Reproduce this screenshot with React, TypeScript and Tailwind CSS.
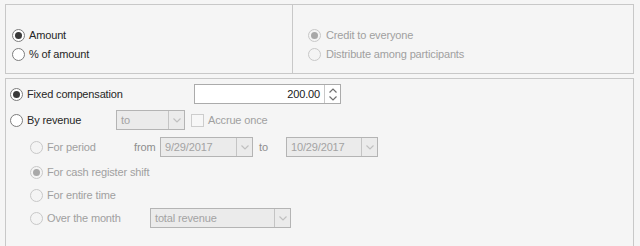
import React from 'react'

function Radio({ checked = false, disabled = false }: { checked?: boolean; disabled?: boolean }) {
  return (
    <div
      className={
        disabled
          ? 'w-[13px] h-[13px] shrink-0 rounded-full border border-[#c8c8c8] bg-[#f4f4f4] flex items-center justify-center'
          : 'w-[13px] h-[13px] shrink-0 rounded-full border border-[#7c7c7c] bg-white flex items-center justify-center'
      }
    >
      {checked && (
        <div className={disabled ? 'w-[7px] h-[7px] rounded-full bg-[#a8a8a8]' : 'w-[7px] h-[7px] rounded-full bg-[#3a3a3a]'} />
      )}
    </div>
  )
}

function Chevron({ down = true, color = '#c0c0c0' }: { down?: boolean; color?: string }) {
  return (
    <svg width="8" height="5" viewBox="0 0 8 5">
      <polyline
        points={down ? '0.5,0.5 4,4 7.5,0.5' : '0.5,4.5 4,1 7.5,4.5'}
        fill="none"
        stroke={color}
        strokeWidth="1.2"
      />
    </svg>
  )
}

function Combo({ text, className }: { text: string; className: string }) {
  return (
    <div className={`${className} h-full flex border border-[#b4b4b4] bg-[#ebebeb]`}>
      <div className="flex-1 flex items-center pl-[4px] text-[#a3a3a3] overflow-hidden whitespace-nowrap">{text}</div>
      <div className="w-[16px] border-l border-[#c4c4c4] flex items-center justify-center">
        <Chevron />
      </div>
    </div>
  )
}

export default function App() {
  return (
    <div className="w-[640px] h-[246px] overflow-hidden bg-[#f5f5f5] font-['Liberation_Sans',Arial,sans-serif] text-[11px] tracking-[-0.15px] text-[#262626] leading-none">
      {/* Top: calculation mode */}
      <div className="ml-[5px] mt-[4px] w-[629px] h-[70px] border border-[#c8c8c8] flex">
        <div className="w-[287px] border-r border-[#c8c8c8] pl-[6px] pt-[21px]">
          <div className="h-[19px] flex items-center gap-[4px]">
            <Radio checked />
            <span>Amount</span>
          </div>
          <div className="h-[19px] flex items-center gap-[4px]">
            <Radio />
            <span>% of amount</span>
          </div>
        </div>
        <div className="flex-1 pl-[15px] pt-[21px] text-[#a0a0a0]">
          <div className="h-[19px] flex items-center gap-[5px]">
            <Radio checked disabled />
            <span>Credit to everyone</span>
          </div>
          <div className="h-[19px] flex items-center gap-[5px]">
            <Radio disabled />
            <span>Distribute among participants</span>
          </div>
        </div>
      </div>

      {/* Bottom: compensation */}
      <div className="ml-[5px] mt-[4px] w-[629px] h-[200px] border border-[#c8c8c8] pl-[4px] pt-[5px]">
        <div className="h-[20px] flex items-center">
          <div className="w-[184px] flex items-center gap-[4px]">
            <Radio checked />
            <span>Fixed compensation</span>
          </div>
          <div className="w-[147px] h-full flex border border-[#ababab] bg-white">
            <div className="flex-1 flex items-center justify-end pr-[4px] text-[#202020]">200.00</div>
            <div className="w-[16px] border-l border-[#c8c8c8] flex flex-col items-center justify-center gap-[3px]">
              <Chevron down={false} color="#707070" />
              <Chevron color="#707070" />
            </div>
          </div>
        </div>

        <div className="mt-[6px] h-[20px] flex items-center">
          <div className="w-[106px] flex items-center gap-[4px]">
            <Radio />
            <span>By revenue</span>
          </div>
          <Combo text="to" className="w-[69px]" />
          <div className="ml-[6px] w-[13px] h-[13px] border border-[#cdcdcd] bg-[#f7f7f7]" />
          <span className="ml-[4px] text-[#a0a0a0]">Accrue once</span>
        </div>

        <div className="mt-[7px] h-[20px] flex items-center pl-[20px] text-[#a0a0a0]">
          <div className="w-[104px] flex items-center gap-[4px]">
            <Radio disabled />
            <span>For period</span>
          </div>
          <span className="w-[26px] text-[#8e8e8e]">from</span>
          <Combo text="9/29/2017" className="w-[93px]" />
          <span className="ml-[6px] w-[27px] text-[#8e8e8e]">to</span>
          <Combo text="10/29/2017" className="w-[92px]" />
        </div>

        <div className="mt-[5px] h-[20px] flex items-center pl-[20px] gap-[4px] text-[#a0a0a0]">
          <Radio checked disabled />
          <span>For cash register shift</span>
        </div>

        <div className="mt-[3px] h-[20px] flex items-center pl-[20px] gap-[4px] text-[#a0a0a0]">
          <Radio disabled />
          <span>For entire time</span>
        </div>

        <div className="mt-[3px] h-[20px] flex items-center pl-[20px] text-[#a0a0a0]">
          <div className="w-[120px] flex items-center gap-[4px]">
            <Radio disabled />
            <span>Over the month</span>
          </div>
          <Combo text="total revenue" className="w-[141px]" />
        </div>
      </div>
    </div>
  )
}
